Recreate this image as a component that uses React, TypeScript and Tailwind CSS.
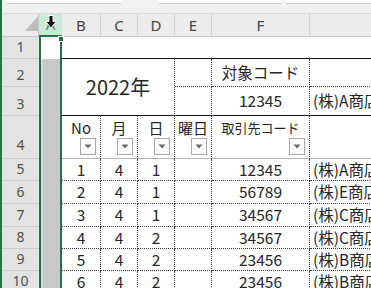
import type { ReactNode } from 'react';

const cellFont = "font-['Noto_Sans_CJK_JP',sans-serif]";
const headFont = "font-['Noto_Sans',sans-serif]";

// cell borders
const dr = 'border-r border-r-[#3a3a3a] [border-right-style:dotted]';
const db = 'border-b border-b-[#3a3a3a] [border-bottom-style:dotted]';
const sb = 'border-b border-b-[#111]';
const gb = 'border-b border-b-[#b4b4b4]';

const columns = ['B', 'C', 'D', 'E', 'F', 'G'];

const records: [number, number, number, string, string][] = [
  [1, 4, 1, '12345', '(株)A商店'],
  [2, 4, 1, '56789', '(株)E商店'],
  [3, 4, 1, '34567', '(株)C商店'],
  [4, 4, 2, '34567', '(株)C商店'],
  [5, 4, 2, '23456', '(株)B商店'],
  [6, 4, 2, '23456', '(株)B商店'],
];

function RowHeader({ n, className = '' }: { n: number; className?: string }) {
  return (
    <div
      className={`flex items-end justify-center border-b border-b-[#cdcdcd] bg-[#e3e3e3] pb-[1px] text-[14px] leading-[20px] text-[#505050] ${headFont} ${className}`}
    >
      {n}
    </div>
  );
}

function Cell({ className = '', children }: { className?: string; children?: ReactNode }) {
  return (
    <div
      className={`relative flex items-center whitespace-nowrap text-[15.5px] text-[#262626] ${cellFont} ${className}`}
    >
      {children}
    </div>
  );
}

function FilterButton() {
  return (
    <span className="absolute bottom-[3px] right-[4px] flex h-[17px] w-[16px] items-center justify-center border border-[#a9a9a9] bg-[#fafafa]">
      <svg width="8" height="5" viewBox="0 0 8 5">
        <path d="M0.5 0.5h7L4 4.5z" fill="#6b6b6b" />
      </svg>
    </span>
  );
}

function HeaderLabel({ children, small }: { children: ReactNode; small?: boolean }) {
  return (
    <span className={`pt-[2px] leading-[20px] ${small ? 'text-[13px]' : 'text-[15px]'}`}>
      {children}
    </span>
  );
}

export default function App() {
  return (
    <div className="relative h-[288px] w-[371px] overflow-hidden border-l-2 border-l-[#217346] bg-white">
      {/* ribbon / formula bar remnants */}
      <div className="flex h-[14px] items-start border-b border-b-[#dadada] bg-[#f1f1f1]">
        <div className="ml-[5px] h-[4px] w-[120px] border-b border-[#cfcfcf] bg-white" />
        <div className="ml-[38px] h-[4px] w-[128px] border-b border-[#cfcfcf] bg-white" />
        <div className="ml-[5px] h-[4px] w-[90px] border-b border-[#cfcfcf] bg-white" />
      </div>

      <div className="grid w-max grid-cols-[37px_23px_39px_37px_37px_37px_98px_140px] grid-rows-[23px_22px_28px_29px_43px_22px_23px_23px_22px_22px_22px]">
        {/* column headers */}
        <div className="relative border-b border-r border-[#c6c6c6] bg-[#ececec]">
          <svg className="absolute left-[23px] top-[2px]" width="14" height="16" viewBox="0 0 14 16">
            <path d="M13 0V15H0z" fill="#bdbdbd" />
          </svg>
        </div>
        <div
          className={`relative flex items-center justify-center border-b-2 border-b-[#217346] bg-[#cde9d7] text-[15px] text-[#4a8a63] ${headFont}`}
        >
          A
          <svg className="absolute left-[6px] top-[1px]" width="12" height="14" viewBox="0 0 12 14">
            <path
              d="M4 0.5h4v6h3.2L6 13L0.8 6.5H4z"
              fill="#000"
              stroke="#fff"
              strokeWidth="1"
              strokeLinejoin="round"
            />
          </svg>
        </div>
        {columns.map((c) => (
          <div
            key={c}
            className={`flex items-center justify-center border-b border-r border-b-[#c6c6c6] border-r-[#d2d2d2] bg-[#ececec] text-[15px] text-[#444] ${headFont}`}
          >
            {c}
          </div>
        ))}

        {/* selected column A */}
        <div className="relative col-start-2 row-span-10 row-start-2 flex flex-col border-x-2 border-[#217346]">
          <div className="h-[22px] bg-white" />
          <div className="flex-1 border-l-2 border-l-[#d8d8d8] bg-[#c8c8c8]" />
          <span className="absolute right-[-4px] top-[-1px] z-10 h-[6px] w-[6px] border border-white bg-[#217346]" />
        </div>

        {/* row 1 */}
        <RowHeader n={1} />
        {columns.map((c) => (
          <Cell key={c} className={sb} />
        ))}

        {/* row 2 */}
        <RowHeader n={2} />
        <Cell className={`col-span-3 row-span-2 justify-center text-[20px] ${dr} ${sb}`}>2022年</Cell>
        <Cell className={`${dr} ${db}`} />
        <Cell className={`justify-center text-[13px] ${dr} ${db}`}>対象コード</Cell>
        <Cell className={db} />

        {/* row 3 */}
        <RowHeader n={3} />
        <Cell className={`${dr} ${sb}`} />
        <Cell className={`justify-center ${dr} ${sb}`}>12345</Cell>
        <Cell className={`pl-[3px] ${sb}`}>(株)A商店</Cell>

        {/* row 4: headers with filters */}
        <RowHeader n={4} className="border-b-[#b4b4b4] pb-[3px]" />
        {['No', '月', '日', '曜日', '取引先コード'].map((label) => (
          <Cell key={label} className={`items-start justify-center ${dr} ${gb}`}>
            <HeaderLabel small={label === '取引先コード'}>{label}</HeaderLabel>
            <FilterButton />
          </Cell>
        ))}
        <Cell className={gb} />

        {/* data rows */}
        {records.map(([no, month, day, code, name], i) => (
          <div key={no} className="contents">
            <RowHeader n={i + 5} />
            <Cell className={`justify-center ${dr} ${db}`}>{no}</Cell>
            <Cell className={`justify-center ${dr} ${db}`}>{month}</Cell>
            <Cell className={`justify-center ${dr} ${db}`}>{day}</Cell>
            <Cell className={`${dr} ${db}`} />
            <Cell className={`justify-center ${dr} ${db}`}>{code}</Cell>
            <Cell className={`pl-[3px] ${db}`}>{name}</Cell>
          </div>
        ))}
      </div>
    </div>
  );
}
